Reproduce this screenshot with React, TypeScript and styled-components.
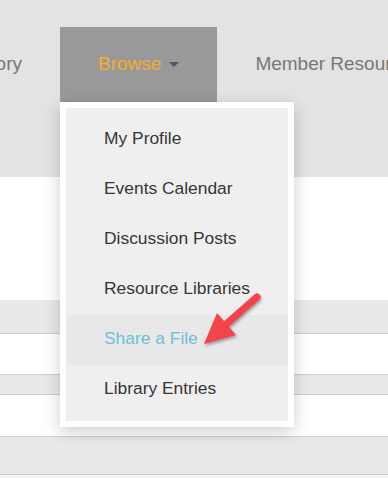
import React from 'react';
import styled, { createGlobalStyle } from 'styled-components';

const GlobalStyle = createGlobalStyle`
  html, body {
    margin: 0;
    padding: 0;
    background: #ffffff;
    overflow: hidden;
  }
  body {
    font-family: 'Liberation Sans', Arial, sans-serif;
  }
`;

const Page = styled.div`
  position: relative;
  width: 388px;
  height: 478px;
  overflow: hidden;
  background: #f4f4f4;
`;

const Header = styled.header`
  height: 177px;
  padding-top: 27px;
  box-sizing: border-box;
  background: #e3e3e3;
`;

const NavList = styled.ul`
  display: flex;
  margin: 0 0 0 -92px;
  padding: 0;
  list-style: none;
`;

const NavItem = styled.li<{ $active?: boolean }>`
  position: relative;
  flex: none;
  display: flex;
  align-items: center;
  gap: 8px;
  height: 75px;
  padding: 0 38px 2px;
  box-sizing: border-box;
  font-size: 19px;
  white-space: nowrap;
  color: ${p => (p.$active ? '#f6ab2d' : '#777777')};
  background: ${p => (p.$active ? '#999999' : 'transparent')};
`;

const Caret = styled.span`
  width: 0;
  height: 0;
  margin-top: 2px;
  border-left: 5px solid transparent;
  border-right: 5px solid transparent;
  border-top: 5px solid #555555;
`;

const Dropdown = styled.div`
  position: absolute;
  top: 100%;
  left: 0;
  z-index: 2;
  width: 234px;
  box-sizing: border-box;
  border: 6px solid #ffffff;
  background: #efefef;
  padding: 7px 0 6px;
  box-shadow: 0 5px 16px rgba(0, 0, 0, 0.2);
`;

const MenuItem = styled.div<{ $hover?: boolean }>`
  height: 50px;
  line-height: 47px;
  padding-left: 38px;
  font-size: 17.4px;
  color: ${p => (p.$hover ? '#6cc0d6' : '#363636')};
  background: ${p => (p.$hover ? '#e8e8e8' : 'transparent')};
`;

const Body = styled.div`
  padding-top: 123px;
  background: #ffffff;
`;

const Band = styled.div<{ $tone: 'gray' | 'white'; $h: number }>`
  height: ${p => p.$h}px;
  background: ${p => (p.$tone === 'gray' ? '#e9e9e9' : '#ffffff')};
  border-bottom: 1px solid #cdcdcd;
`;

const Pointer = styled.svg`
  position: absolute;
  left: 190px;
  top: 285px;
  z-index: 3;
  filter: drop-shadow(1px 2px 1.5px rgba(0, 0, 0, 0.35));
`;

const menu = [
  'My Profile',
  'Events Calendar',
  'Discussion Posts',
  'Resource Libraries',
  'Share a File',
  'Library Entries',
];

export default function App() {
  return (
    <Page>
      <GlobalStyle />
      <Header>
        <NavList>
          <NavItem>Directory</NavItem>
          <NavItem $active>
            Browse
            <Caret />
            <Dropdown>
              {menu.map(label => (
                <MenuItem key={label} $hover={label === 'Share a File'}>
                  {label}
                </MenuItem>
              ))}
            </Dropdown>
          </NavItem>
          <NavItem>Member Resources</NavItem>
        </NavList>
      </Header>
      <Body>
        <Band $tone="gray" $h={33} />
        <Band $tone="white" $h={40} />
        <Band $tone="gray" $h={19} />
        <Band $tone="white" $h={41} />
        <Band $tone="gray" $h={37} />
      </Body>
      <Pointer width="80" height="70" viewBox="0 0 80 70">
        <line
          x1="67"
          y1="12"
          x2="34"
          y2="41"
          stroke="#f4444a"
          strokeWidth="7"
          strokeLinecap="round"
        />
        <polygon points="14,59 27,28 46,50" fill="#f4444a" />
      </Pointer>
    </Page>
  );
}
